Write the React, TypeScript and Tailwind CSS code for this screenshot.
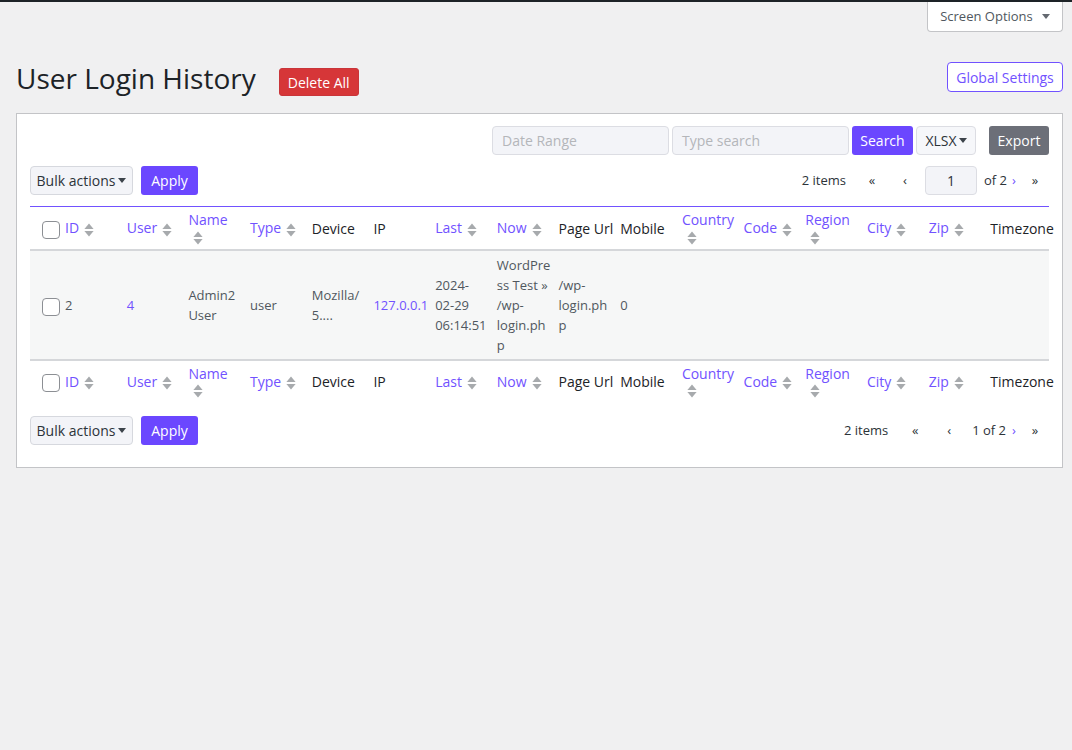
import React from "react";

type Col = { label: string; sort?: boolean; wrap?: boolean };

const columns: Col[] = [
  { label: "ID", sort: true },
  { label: "User", sort: true },
  { label: "Name", sort: true, wrap: true },
  { label: "Type", sort: true },
  { label: "Device" },
  { label: "IP" },
  { label: "Last", sort: true },
  { label: "Now", sort: true },
  { label: "Page Url" },
  { label: "Mobile" },
  { label: "Country", sort: true, wrap: true },
  { label: "Code", sort: true },
  { label: "Region", sort: true, wrap: true },
  { label: "City", sort: true },
  { label: "Zip", sort: true },
  { label: "Timezone" },
];

function SortIcon() {
  return (
    <svg width="10" height="14" viewBox="0 0 10 14" className="inline-block align-middle" fill="#a7aaad">
      <path d="M5 0.5L9.6 6H0.4z" />
      <path d="M0.4 8h9.2L5 13.5z" />
    </svg>
  );
}

function Caret({ className = "" }: { className?: string }) {
  return (
    <svg width="8" height="5" viewBox="0 0 8 5" className={"inline-block " + className} fill="currentColor">
      <path d="M0 0h8L4 5z" />
    </svg>
  );
}

function Checkbox() {
  return <span className="inline-block h-[18px] w-[18px] rounded-[4px] border border-[#8c8f94] bg-white align-middle" />;
}

function HeaderRow({ bottom }: { bottom?: boolean }) {
  const h = bottom ? "h-[42px] " : "h-[43px] border-b-2 border-[#d5d7da] ";
  return (
    <tr>
      <th className={h + "pl-[12px] text-left align-middle"}>
        <Checkbox />
      </th>
      {columns.map((c) => (
        <th
          key={c.label}
          className={
            h +
            "pl-[3px] pr-[5px] text-left align-middle text-[14px] font-normal leading-[17px] " +
            (c.sort ? "text-[#7152ff]" : "text-[#1d2327]")
          }
        >
          <span className="whitespace-nowrap">{c.label}</span>
          {c.sort && !c.wrap && (
            <span className="ml-[5px] inline-block">
              <SortIcon />
            </span>
          )}
          {c.sort && c.wrap && (
            <span className="block pl-[5px] leading-[15px]">
              <SortIcon />
            </span>
          )}
        </th>
      ))}
    </tr>
  );
}

function Lines({ lines }: { lines: string[] }) {
  return (
    <>
      {lines.map((l, i) => (
        <span key={i} className="block whitespace-nowrap">
          {l}
        </span>
      ))}
    </>
  );
}

function BulkRow() {
  return (
    <div className="flex items-center gap-[8px]">
      <button className="flex h-[29px] w-[103px] items-center justify-center gap-[3px] rounded-[4px] border border-[#d6d8de] bg-[#f3f4f8] text-[14px] text-[#2c3338]">
        Bulk actions
        <Caret className="text-[#3c434a]" />
      </button>
      <button className="h-[29px] w-[57px] rounded-[3px] bg-[#6b47ff] text-[14px] text-white">Apply</button>
    </div>
  );
}

export default function App() {
  const td = "pl-[3px] pr-[5px] py-[4px] align-middle text-[13px] leading-[20px] text-[#50575e] border-b-2 border-[#d5d7da]";
  return (
    <div className="min-h-[750px] bg-[#f0f0f1] font-['Open_Sans',sans-serif] text-[#2c3338]">
      <div className="h-[2px] bg-[#1d2327]" />
      <div className="flex justify-end pr-[9px]">
        <button className="flex h-[30px] w-[136px] items-center justify-center gap-[9px] rounded-b-[4px] border border-t-0 border-[#c3c4c7] bg-white text-[13px] text-[#50575e]">
          Screen Options
          <Caret className="text-[#646970]" />
        </button>
      </div>

      <div className="mt-[30px] flex items-start justify-between pl-[16px] pr-[9px]">
        <div className="flex items-start">
          <h1 className="-mt-[2px] text-[28px] font-normal leading-[36px] text-[#1d2327]">User Login History</h1>
          <button className="ml-[23px] mt-[6px] h-[28px] w-[80px] rounded-[3px] border border-[#c9353a] bg-[#d63638] text-[14px] text-white">
            Delete All
          </button>
        </div>
        <button className="h-[30px] w-[116px] rounded-[4px] border border-[#7152ff] bg-white text-[14px] text-[#7152ff]">
          Global Settings
        </button>
      </div>

      <div className="ml-[16px] mr-[9px] mt-[17px] border border-[#c3c4c7] bg-white px-[13px] pb-[22px] pt-[11px]">
        <div className="flex h-[30px] items-center justify-end">
          <div className="flex h-[29px] w-[177px] items-center rounded-[4px] border border-[#dcdde3] bg-[#f3f4f8] px-[9px] text-[14px] text-[#b4b6ba]">
            Date Range
          </div>
          <div className="ml-[3px] flex h-[29px] w-[177px] items-center rounded-[4px] border border-[#dcdde3] bg-[#f3f4f8] px-[9px] text-[14px] text-[#b4b6ba]">
            Type search
          </div>
          <button className="ml-[3px] h-[29px] w-[61px] rounded-[3px] bg-[#6b47ff] text-[14px] text-white">Search</button>
          <button className="ml-[3px] flex h-[29px] w-[60px] items-center justify-center gap-[2px] rounded-[4px] border border-[#dcdde3] bg-[#f6f7fa] text-[14px] text-[#2c3338]">
            XLSX
            <Caret className="text-[#3c434a]" />
          </button>
          <button className="ml-[13px] h-[29px] w-[60px] rounded-[3px] bg-[#6c6f78] text-[14px] text-white">Export</button>
        </div>

        <div className="mt-[11px] flex h-[29px] items-center justify-between">
          <BulkRow />
          <div className="flex items-center pr-[9px] text-[13px] text-[#2c3338]">
            <span>2 items</span>
            <span className="ml-[21px] w-[10px] text-center">«</span>
            <span className="ml-[23px] w-[10px] text-center">‹</span>
            <span className="ml-[15px] flex h-[29px] w-[52px] items-center justify-center rounded-[4px] border border-[#dcdde3] bg-[#f3f4f8] text-[14px]">
              1
            </span>
            <span className="ml-[7px]">of 2</span>
            <span className="ml-[3px] w-[8px] text-center text-[#7152ff]">›</span>
            <span className="ml-[12px] w-[10px] text-center">»</span>
          </div>
        </div>

        <div className="mt-[11px] border-t border-[#7152ff]">
          <table className="w-full table-fixed">
            <colgroup>
              <col className="w-[32px]" />
              {columns.map((c) => (
                <col key={c.label} />
              ))}
            </colgroup>
            <thead>
              <HeaderRow />
            </thead>
            <tbody>
              <tr className="bg-[#f6f7f7]">
                <td className="pl-[12px] align-middle border-b-2 border-[#d5d7da]">
                  <Checkbox />
                </td>
                <td className={td}>2</td>
                <td className={td + " !text-[#7152ff]"}>4</td>
                <td className={td}>
                  <Lines lines={["Admin2", "User"]} />
                </td>
                <td className={td}>user</td>
                <td className={td}>
                  <Lines lines={["Mozilla/", "5...."]} />
                </td>
                <td className={td + " !text-[#7152ff]"}>127.0.0.1</td>
                <td className={td}>
                  <Lines lines={["2024-", "02-29", "06:14:51"]} />
                </td>
                <td className={td}>
                  <Lines lines={["WordPre", "ss Test »", "/wp-", "login.ph", "p"]} />
                </td>
                <td className={td}>
                  <Lines lines={["/wp-", "login.ph", "p"]} />
                </td>
                <td className={td}>0</td>
                <td className={td}></td>
                <td className={td}></td>
                <td className={td}></td>
                <td className={td}></td>
                <td className={td}></td>
                <td className={td}></td>
              </tr>
            </tbody>
            <tfoot>
              <HeaderRow bottom />
            </tfoot>
          </table>
        </div>

        <div className="mt-[14px] flex h-[29px] items-center justify-between">
          <BulkRow />
          <div className="flex items-center pr-[9px] text-[13px] text-[#2c3338]">
            <span>2 items</span>
            <span className="ml-[22px] w-[10px] text-center">«</span>
            <span className="ml-[24px] w-[10px] text-center">‹</span>
            <span className="ml-[18px]">1 of 2</span>
            <span className="ml-[4px] w-[8px] text-center text-[#7152ff]">›</span>
            <span className="ml-[12px] w-[10px] text-center">»</span>
          </div>
        </div>
      </div>
    </div>
  );
}
